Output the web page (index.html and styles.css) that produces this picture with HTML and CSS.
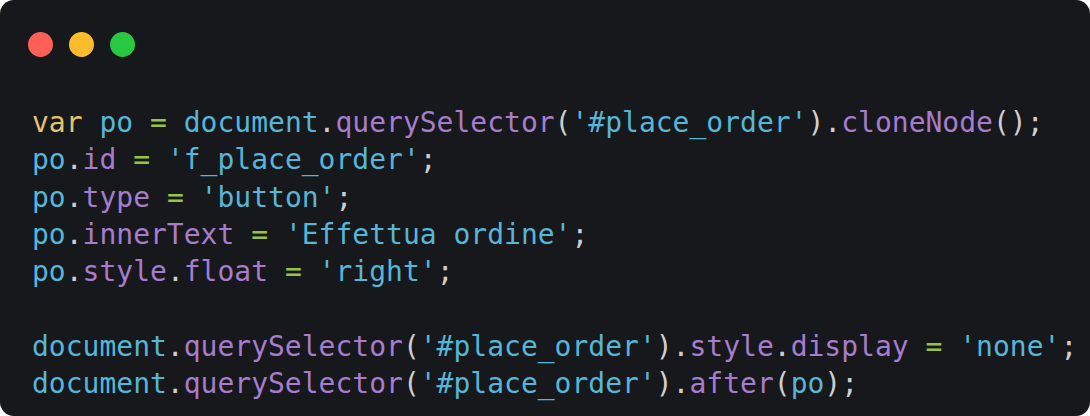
FILE: index.html
```html
<!DOCTYPE html>
<html>
<head>
<meta charset="utf-8">
<link rel="stylesheet" href="styles.css">
</head>
<body>
<div class="window">
  <div class="dots">
    <span class="dot red"></span>
    <span class="dot yellow"></span>
    <span class="dot green"></span>
  </div>
<pre class="code"><span class="kw">var</span> <span class="id">po</span> <span class="op">=</span> <span class="id">document</span><span class="pn">.</span><span class="fn">querySelector</span><span class="pn">(</span><span class="str">'#place_order'</span><span class="pn">).</span><span class="fn">cloneNode</span><span class="pn">();</span>
<span class="id">po</span><span class="pn">.</span><span class="fn">id</span> <span class="op">=</span> <span class="str">'f_place_order'</span><span class="pn">;</span>
<span class="id">po</span><span class="pn">.</span><span class="fn">type</span> <span class="op">=</span> <span class="str">'button'</span><span class="pn">;</span>
<span class="id">po</span><span class="pn">.</span><span class="fn">innerText</span> <span class="op">=</span> <span class="str">'Effettua ordine'</span><span class="pn">;</span>
<span class="id">po</span><span class="pn">.</span><span class="fn">style</span><span class="pn">.</span><span class="fn">float</span> <span class="op">=</span> <span class="str">'right'</span><span class="pn">;</span>

<span class="id">document</span><span class="pn">.</span><span class="fn">querySelector</span><span class="pn">(</span><span class="str">'#place_order'</span><span class="pn">).</span><span class="fn">style</span><span class="pn">.</span><span class="fn">display</span> <span class="op">=</span> <span class="str">'none'</span><span class="pn">;</span>
<span class="id">document</span><span class="pn">.</span><span class="fn">querySelector</span><span class="pn">(</span><span class="str">'#place_order'</span><span class="pn">).</span><span class="fn">after</span><span class="pn">(</span><span class="id">po</span><span class="pn">);</span></pre>
</div>
</body>
</html>
```

FILE: styles.css
```css
html, body {
  margin: 0;
  padding: 0;
  background: #ffffff;
}
.window {
  width: 1090px;
  height: 416px;
  box-sizing: border-box;
  background: #17181b;
  border-radius: 14px;
  padding: 32px 0 0 32px;
  overflow: hidden;
}
.dots {
  display: flex;
  gap: 16px;
  padding-left: -4px;
  margin-left: -4px;
}
.dot {
  width: 25px;
  height: 25px;
  border-radius: 50%;
  display: block;
}
.red { background: #fe5f57; }
.yellow { background: #fdbc2e; }
.green { background: #28c840; }
.code {
  margin: 47px 0 0 0;
  font-family: "DejaVu Sans Mono", monospace;
  font-size: 28px;
  line-height: 37.33px;
  color: #cfcfcf;
}
.kw { color: #e5c36e; }
.id { color: #56b6d8; }
.str { color: #56b6d8; }
.fn { color: #a67dcc; }
.op { color: #98c34a; }
.pn { color: #cfcfcf; }
```
